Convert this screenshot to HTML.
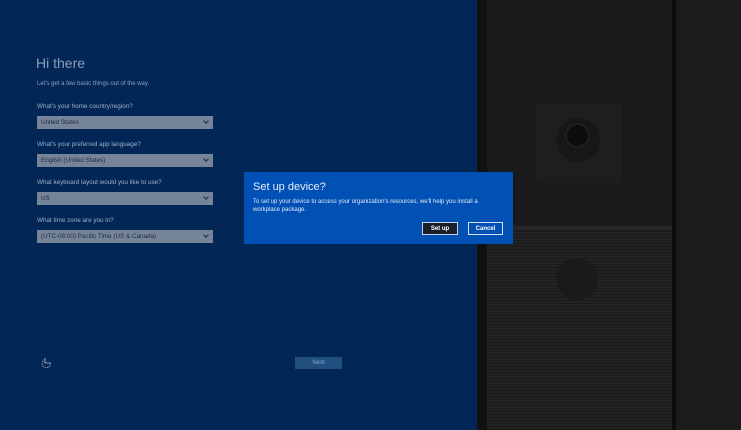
<!DOCTYPE html>
<html><head><style>
*{margin:0;padding:0;box-sizing:border-box}
body{width:741px;height:430px;overflow:hidden;background:#1b1b1b;font-family:"Liberation Sans",sans-serif;position:relative}
.l{position:absolute;left:0;top:0;width:477px;height:430px;background:#022757}
.t{position:absolute;color:#8da2c0;white-space:nowrap}
.f{position:absolute;left:37px;width:176px;height:13px;background:#76849a;color:#1e2a3e;font-size:6.3px;line-height:14px;padding-left:4px}
.f:after{content:"";position:absolute;right:5px;top:3px;width:3px;height:3px;border-right:1.3px solid #1e2a3e;border-bottom:1.3px solid #1e2a3e;transform:rotate(45deg)}
.lab{font-size:6.3px;color:#9fb0c8}
</style></head><body>
<div class="l"></div>
<div class="t" style="left:36px;top:55px;font-size:14px;color:#8a9fbd">Hi there</div>
<div class="t" style="left:37px;top:81px;font-size:6px">Let's get a few basic things out of the way.</div>
<div class="t lab" style="left:37px;top:103px">What's your home country/region?</div>
<div class="f" style="top:116px">United States</div>
<div class="t lab" style="left:37px;top:141px">What's your preferred app language?</div>
<div class="f" style="top:154px">English (United States)</div>
<div class="t lab" style="left:37px;top:179px">What keyboard layout would you like to use?</div>
<div class="f" style="top:192px">US</div>
<div class="t lab" style="left:37px;top:217px">What time zone are you in?</div>
<div class="f" style="top:230px">(UTC-08:00) Pacific Time (US &amp; Canada)</div>
<svg style="position:absolute;left:40px;top:357px" width="14" height="13"><path d="M5 2.5A4.2 4.2 0 1 0 10.5 6.5" fill="none" stroke="#8f9db3" stroke-width="1" stroke-dasharray="1.5 1"/><path d="M5 1v5h6" fill="none" stroke="#8f9db3" stroke-width="1"/></svg>
<div style="position:absolute;left:295px;top:357px;width:47px;height:12px;background:#204f80;color:#8ea6c4;font-size:6px;text-align:center;line-height:13px">Next</div>
<div style="position:absolute;left:477px;top:0;width:10px;height:430px;background:#111"></div>
<div style="position:absolute;left:487px;top:0;width:185px;height:228px;background:#1a1a1a"></div>
<div style="position:absolute;left:536px;top:103px;width:86px;height:80px;background:#1e1e1e;border-radius:4px"></div>
<div style="position:absolute;left:556px;top:118px;width:44px;height:44px;border-radius:50%;background:#171717"></div>
<div style="position:absolute;left:565px;top:123px;width:25px;height:25px;border-radius:50%;background:#0d0d0d;border:2px solid #202020"></div>
<div style="position:absolute;left:487px;top:228px;width:185px;height:202px;background:repeating-linear-gradient(0deg,#1a1a1a 0 1px,#232323 1px 3px);"></div>
<div style="position:absolute;left:487px;top:226px;width:185px;height:3px;background:#282828"></div>
<div style="position:absolute;left:556px;top:258px;width:42px;height:42px;border-radius:50%;background:#1a1a1a"></div>
<div style="position:absolute;left:672px;top:0;width:4px;height:430px;background:#0c0c0c"></div>
<div style="position:absolute;left:676px;top:0;width:65px;height:430px;background:#1c1c1c"></div>
<div style="position:absolute;left:244px;top:172px;width:269px;height:72px;background:#0151b5"></div>
<div class="t" style="left:253px;top:181px;font-size:11px;color:#e6eefa">Set up device?</div>
<div class="t" style="left:253px;top:198px;font-size:6px;color:#e0e9f7;line-height:8px">To set up your device to access your organization's resources, we'll help you install a<br>workplace package.</div>
<div style="position:absolute;left:422px;top:222px;width:36px;height:13px;background:#1a1f2b;border:1px solid #c8d4e6;color:#fff;font-size:6px;font-weight:bold;text-align:center;line-height:12px">Set up</div>
<div style="position:absolute;left:468px;top:222px;width:35px;height:13px;background:#0151b5;border:1px solid #d6e0f0;color:#fff;font-size:6px;font-weight:bold;text-align:center;line-height:12px">Cancel</div>
</body></html>
